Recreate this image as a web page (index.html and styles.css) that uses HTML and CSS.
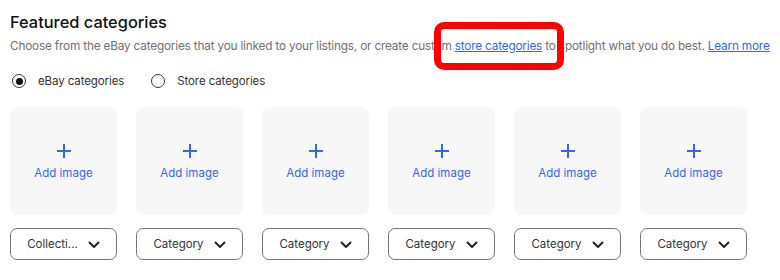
FILE: index.html
```html
<!DOCTYPE html>
<html lang="en">
<head>
    <meta charset="UTF-8">
    <meta name="viewport" content="width=device-width, initial-scale=1.0">
    <title>Featured categories</title>
    <link rel="stylesheet" href="styles.css">
</head>
<body>
    <div class="container">
        <h2 class="title">Featured categories</h2>
        <p class="subtitle">Choose from the eBay categories that you linked to your listings, or create custom <a href="#">store categories</a> to spotlight what you do best. <a href="#">Learn more</a></p>

        <div class="radios">
            <label class="radio"><span class="dot checked"></span>eBay categories</label>
            <label class="radio"><span class="dot"></span>Store categories</label>
        </div>

        <div class="tiles">
            <div class="slot">
                <div class="tile"><span class="plus"></span><span class="add">Add image</span></div>
                <button class="select">Collecti... <svg class="chev" viewBox="0 0 12 7"><polyline points="1,1 6,6 11,1"/></svg></button>
            </div>
            <div class="slot">
                <div class="tile"><span class="plus"></span><span class="add">Add image</span></div>
                <button class="select">Category <svg class="chev" viewBox="0 0 12 7"><polyline points="1,1 6,6 11,1"/></svg></button>
            </div>
            <div class="slot">
                <div class="tile"><span class="plus"></span><span class="add">Add image</span></div>
                <button class="select">Category <svg class="chev" viewBox="0 0 12 7"><polyline points="1,1 6,6 11,1"/></svg></button>
            </div>
            <div class="slot">
                <div class="tile"><span class="plus"></span><span class="add">Add image</span></div>
                <button class="select">Category <svg class="chev" viewBox="0 0 12 7"><polyline points="1,1 6,6 11,1"/></svg></button>
            </div>
            <div class="slot">
                <div class="tile"><span class="plus"></span><span class="add">Add image</span></div>
                <button class="select">Category <svg class="chev" viewBox="0 0 12 7"><polyline points="1,1 6,6 11,1"/></svg></button>
            </div>
            <div class="slot">
                <div class="tile"><span class="plus"></span><span class="add">Add image</span></div>
                <button class="select">Category <svg class="chev" viewBox="0 0 12 7"><polyline points="1,1 6,6 11,1"/></svg></button>
            </div>
        </div>

        <div class="highlight"></div>
    </div>
</body>
</html>
```

FILE: styles.css
```css
body {
    margin: 0;
    background: #fff;
    font-family: Inter, "Open Sans", Arial, sans-serif;
    color: #111;
}
.container {
    position: relative;
    padding: 11px 10px 0 10px;
}
.title {
    margin: 0;
    font-size: 16.4px;
    font-weight: 500;
    line-height: 22px;
}
.subtitle {
    margin: 4px 0 0 0;
    font-size: 11.8px;
    line-height: 18px;
    color: #707070;
    white-space: nowrap;
    letter-spacing: -0.19px;
}
.subtitle a {
    color: #3665f3;
    text-decoration: underline;
}
.radios {
    display: flex;
    gap: 25px;
    margin-top: 17px;
    height: 18px;
    align-items: center;
}
.radio {
    display: flex;
    align-items: center;
    gap: 12px;
    font-size: 11.5px;
    letter-spacing: -0.1px;
    color: #333;
    padding-left: 2px;
}
.dot {
    width: 14px;
    height: 14px;
    border: 1.5px solid #333;
    border-radius: 50%;
    box-sizing: border-box;
    display: flex;
    align-items: center;
    justify-content: center;
}
.dot.checked::after {
    content: "";
    width: 7px;
    height: 7px;
    border-radius: 50%;
    background: #111;
}
.tiles {
    display: flex;
    gap: 19px;
    margin-top: 17px;
}
.slot {
    width: 107px;
    display: flex;
    flex-direction: column;
    gap: 13px;
}
.tile {
    height: 108px;
    background: #f7f7f7;
    border-radius: 8px;
    display: flex;
    flex-direction: column;
    align-items: center;
    justify-content: center;
    gap: 8px;
    padding-top: 2px;
    box-sizing: border-box;
}
.plus {
    position: relative;
    width: 14px;
    height: 14px;
}
.plus::before,
.plus::after {
    content: "";
    position: absolute;
    background: #3665f3;
}
.plus::before {
    left: 6px;
    top: 0;
    width: 2px;
    height: 14px;
}
.plus::after {
    top: 6px;
    left: 0;
    width: 14px;
    height: 2px;
}
.add {
    font-size: 11.5px;
    line-height: 14px;
    color: #3665f3;
}
.select {
    height: 32px;
    width: 107px;
    border: 1.5px solid #767676;
    border-radius: 7px;
    background: #fff;
    font-family: inherit;
    font-size: 11.5px;
    color: #333;
    display: flex;
    align-items: center;
    justify-content: center;
    gap: 10px;
    padding: 0;
}
.chev {
    width: 12px;
    height: 7px;
    fill: none;
    stroke: #222;
    stroke-width: 2;
}
.highlight {
    position: absolute;
    left: 434px;
    top: 22px;
    width: 130px;
    height: 48px;
    box-sizing: border-box;
    border: 7px solid #f00;
    border-radius: 10px;
}
```
